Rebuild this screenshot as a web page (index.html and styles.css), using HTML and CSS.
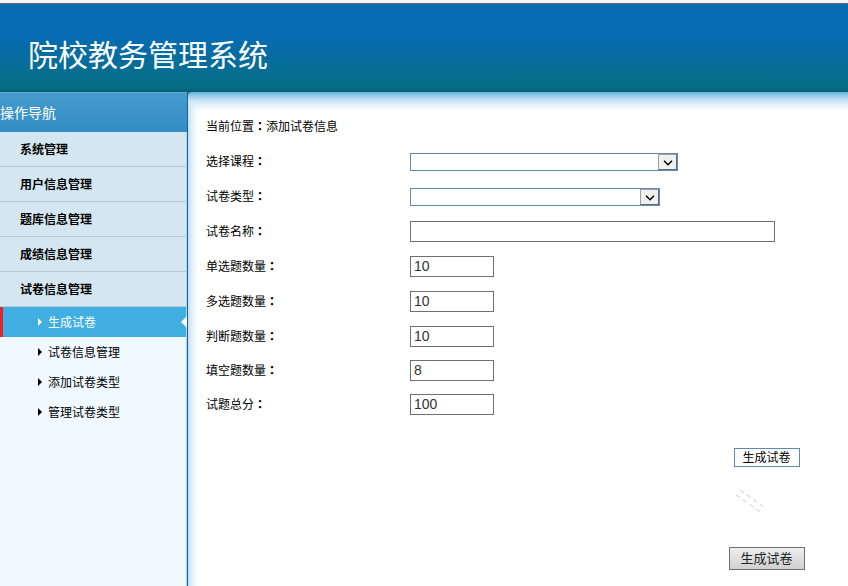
FILE: index.html
```html
<!DOCTYPE html>
<html lang="zh-CN">

<head>
    <meta charset="UTF-8">
    <title>院校教务管理系统</title>
    <link rel="stylesheet" href="styles.css">
</head>

<body>
    <div class="header">
        <h1>院校教务管理系统</h1>
    </div>

    <div class="wrap">
        <div class="left">
            <div class="lefttop">操作导航</div>
            <ul class="menu">
                <li>系统管理</li>
                <li>用户信息管理</li>
                <li>题库信息管理</li>
                <li>成绩信息管理</li>
                <li>试卷信息管理</li>
            </ul>
            <ul class="submenu">
                <li class="active"><i class="arrow"></i>生成试卷<i class="pointer"></i></li>
                <li><i class="arrow"></i>试卷信息管理</li>
                <li><i class="arrow"></i>添加试卷类型</li>
                <li><i class="arrow"></i>管理试卷类型</li>
            </ul>
        </div>

        <div class="main">
            <form>
                <div class="row place">当前位置<span class="colon" lang="zh-TW">：</span>添加试卷信息</div>
                <div class="row">
                    <label>选择课程<span class="colon" lang="zh-TW">：</span></label>
                    <div class="select course"><span class="drop"><svg width="10" height="6" viewBox="0 0 10 6"><path d="M1 .8l4 4L9 .8" /></svg></span></div>
                </div>
                <div class="row">
                    <label>试卷类型<span class="colon" lang="zh-TW">：</span></label>
                    <div class="select type"><span class="drop"><svg width="10" height="6" viewBox="0 0 10 6"><path d="M1 .8l4 4L9 .8" /></svg></span></div>
                </div>
                <div class="row">
                    <label>试卷名称<span class="colon" lang="zh-TW">：</span></label>
                    <input type="text" class="name">
                </div>
                <div class="row">
                    <label>单选题数量<span class="colon" lang="zh-TW">：</span></label>
                    <input type="text" value="10">
                </div>
                <div class="row">
                    <label>多选题数量<span class="colon" lang="zh-TW">：</span></label>
                    <input type="text" value="10">
                </div>
                <div class="row">
                    <label>判断题数量<span class="colon" lang="zh-TW">：</span></label>
                    <input type="text" value="10">
                </div>
                <div class="row short">
                    <label>填空题数量<span class="colon" lang="zh-TW">：</span></label>
                    <input type="text" value="8">
                </div>
                <div class="row short">
                    <label>试题总分<span class="colon" lang="zh-TW">：</span></label>
                    <input type="text" value="100">
                </div>
                <div class="actions">
                    <button type="button" class="flat">生成试卷</button>
                    <svg class="trace" width="30" height="26" viewBox="0 0 30 26">
                        <path d="M5 1L30 19M1 6L27 24" />
                    </svg>
                    <button type="button" class="submit">生成试卷</button>
                </div>
            </form>
        </div>
    </div>
</body>

</html>
```

FILE: styles.css
```css
* {
    box-sizing: border-box;
}

body {
    margin: 0;
    height: 586px;
    overflow: hidden;
    font-family: "Noto Sans CJK SC", sans-serif;
    font-size: 12px;
    color: #000;
    background: #fff;
}

ul {
    list-style: none;
    margin: 0;
    padding: 0;
}

.header {
    height: 92px;
    border-top: 3px solid #f5f3f4;
    background: linear-gradient(#5d6b73 1px, #066bb0 1px, #066bb0 35px, #066f87 82px, #066a80 86px, #075a70);
}

.header h1 {
    margin: 0;
    padding: 29px 0 0 28px;
    font-size: 30px;
    line-height: 42px;
    font-weight: normal;
    color: #fff;
}

.wrap {
    display: flex;
    height: 494px;
    background: #066aa0;
}

.left {
    width: 187px;
    background: #f0f9ff;
    border-right: 1px solid #b7d5df;
}

.lefttop {
    width: 187px;
    height: 40px;
    border-top: 1px solid #5eb0dc;
    background: linear-gradient(#459bce, #348dc5);
    color: #fff;
    font-size: 14px;
    line-height: 39px;
}

.menu li {
    height: 35px;
    padding-left: 20px;
    line-height: 34px;
    font-weight: bold;
    background: #d4e7f0;
    border-bottom: 1px solid #b6cad4;
}

.submenu li {
    display: flex;
    align-items: center;
    height: 30px;
    padding-left: 38px;
    line-height: 30px;
}

.submenu .active {
    position: relative;
    padding-left: 35px;
    color: #fff;
    background: #40aee1;
    border-left: 3px solid #ee2020;
}

.arrow {
    width: 4px;
    margin-right: 6px;
    border: 4px solid transparent;
    border-left-color: currentColor;
    border-right: 0;
}

.pointer {
    position: absolute;
    right: -1px;
    top: 9px;
    border: 6px solid transparent;
    border-right-color: #fff;
    border-left: 0;
}

.main {
    flex: 1;
    margin-left: 1px;
    padding: 17px 0 0 18px;
    border-top-left-radius: 4px;
    background:
        linear-gradient(#62b0dc, #9ccdeb 4px, #d5eaf7 10px, rgba(255, 255, 255, 0) 19px),
        linear-gradient(90deg, #c4def2, #e8f4fd 5px, #fff 10px);
}

.row {
    display: flex;
    align-items: center;
    height: 35px;
}

.row.place {
    padding-bottom: 2px;
}

.row.short {
    height: 34px;
    padding-bottom: 1px;
}

.row label {
    width: 204px;
    padding-bottom: 2px;
}

/* the TC face centres the full-width colon */
.colon {
    font-family: "Noto Sans CJK TC", sans-serif;
    font-weight: bold;
}

input {
    width: 84px;
    height: 21px;
    padding: 0 3px 2px;
    border: 1px solid #707070;
    font: 14px "Liberation Sans", Arial, sans-serif;
    color: #333;
}

input.name {
    width: 365px;
}

.select {
    display: flex;
    justify-content: flex-end;
    height: 18px;
    border: 1px solid #5f8bb3;
}

.course {
    width: 268px;
}

.type {
    width: 250px;
}

.drop {
    display: flex;
    align-items: center;
    justify-content: center;
    width: 19px;
    height: 16px;
    padding-top: 2px;
    background: #f0f0f0;
    border: 1px solid #a0a0a0;
    border-right-color: #696969;
    border-bottom-color: #696969;
}

.drop path {
    fill: none;
    stroke: #000;
    stroke-width: 1.5;
}

.actions {
    display: flex;
    flex-direction: column;
    align-items: flex-end;
    padding: 26px 43px 0 0;
}

button {
    padding: 0 1px 2px 0;
    font-family: inherit;
    color: #000;
}

.flat {
    width: 66px;
    height: 19px;
    margin-right: 5px;
    border: 1px solid #5f8bb3;
    background: #fff;
    font-size: 12px;
    line-height: 15px;
}

.trace {
    margin: 22px 40px 0 0;
}

.trace path {
    fill: none;
    stroke: #e0c3cc;
    stroke-dasharray: 5 3;
}

.submit {
    width: 76px;
    height: 23px;
    margin-top: 32px;
    border: 1px solid #707070;
    background: linear-gradient(#eee, #d0d0d0);
    font-size: 13px;
    line-height: 19px;
    color: #222;
}
```
